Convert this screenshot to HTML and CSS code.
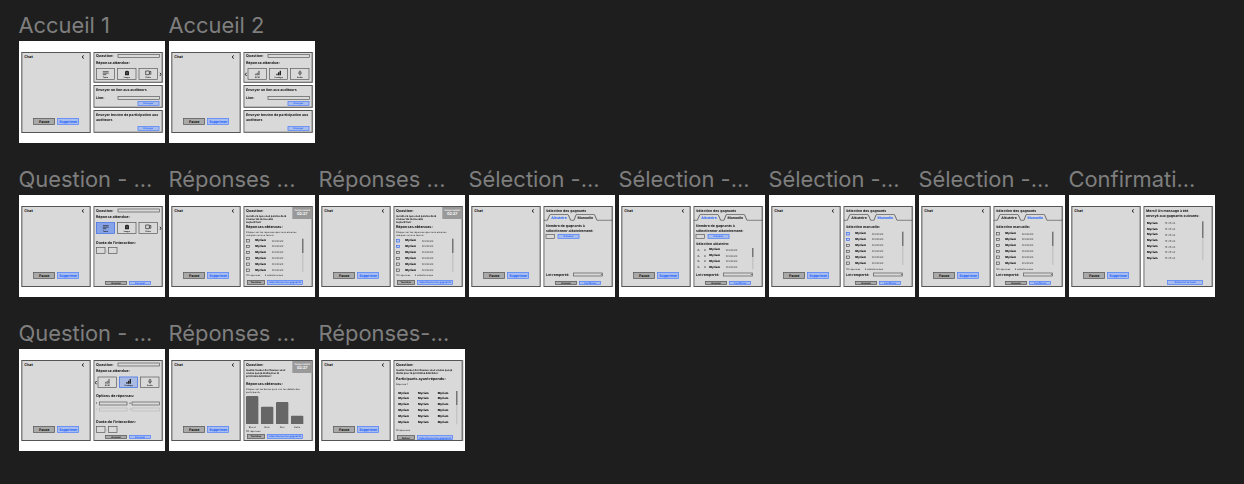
FILE: index.html
```html
<!DOCTYPE html>
<html lang="fr">
<head>
<meta charset="utf-8">
<title>Wireframes</title>
<link rel="stylesheet" href="styles.css">
</head>
<body>
<main class="canvas" id="canvas"></main>
<script src="app.js"></script>
</body>
</html>
```
FILE: styles.css
```css
* { box-sizing: border-box; }
body {
  margin: 0;
  height: 484px;
  overflow: hidden;
  background: #1e1e1e;
  font-family: Inter, "Liberation Sans", sans-serif;
}
.canvas { padding: 11px 0 0 18.5px; }
.row { display: flex; height: 154px; }
.item { width: 150px; }
.title {
  margin: 0;
  height: 30px;
  line-height: 28px;
  font-size: 21.9px;
  font-weight: 400;
  color: #7e7e7e;
  white-space: nowrap;
}
.frame { width: 146.5px; height: 102px; overflow: hidden; background: #fff; }

/* A screen is drawn at three times its size on the canvas. */
.screen {
  display: flex;
  gap: 8px;
  width: 440px;
  height: 307px;
  padding: 33px 8px 31px 7px;
  transform: scale(.33333);
  transform-origin: 0 0;
  font-size: 11px;
  font-weight: 700;
  line-height: 13px;
  color: #111;
  white-space: nowrap;
  text-rendering: geometricPrecision;
}
.panel {
  position: relative;
  width: 208px;
  padding: 0 8px;
  background: #d9d9d9;
  box-shadow: inset 0 0 0 3px #555;
}
.panel.right { box-shadow: inset 0 0 0 3px #555, 2px 0 0 #999; }
.chat { display: grid; grid-template-rows: 30px 1fr 45px; height: 243px; }
.chat-head { display: flex; justify-content: space-between; align-items: center; padding: 0 12px 0 1px; }
.chat .actions { grid-row: 3; padding-left: 28px; }
.chev { display: block; flex: none; width: 7px; height: 12px; fill: none; stroke: #111; stroke-width: 2.6; }

.btn {
  display: flex;
  align-items: center;
  justify-content: center;
  width: 65px;
  height: 11px;
  border: 2px solid #555;
  background: #a9a9a9;
  font-size: 7.5px;
  line-height: 7px;
}
.btn.blue { border-color: #4d7dfa; background: #a9bdec; color: #2463ff; }
.btn.big { height: 20px; font-size: 10.5px; }
.btn.mid { width: 54px; height: 14px; }
.btn.wide { width: 107px; height: 14px; }
.actions { display: flex; gap: 7px; }
.foot { align-self: end; padding: 0 0 7px 28px; }
.foot.low { padding-left: 3px; }
.foot.last { padding-left: 64px; }

.cards { display: flex; flex-direction: column; gap: 7px; width: 208px; }
.card { display: grid; height: 68px; grid-template-rows: 28px 1fr 19px; }
.card.ask { height: 92px; grid-template-rows: 25px 14px 44px; }
.card.call { grid-template-rows: 9px 1fr 19px; }
.card .btn { grid-row: 3; justify-self: end; align-self: start; height: 13px; margin-right: 2px; }
.card.call p { grid-row: 2; align-self: start; }
p { margin: 0; align-self: center; }
.s10 { font-size: 10.6px; }
.field { display: flex; align-items: center; justify-content: space-between; }
.input { width: 126px; height: 11px; margin-right: 1px; border: 2px solid #555; }

.tiles { position: relative; display: flex; gap: 7px; align-self: end; }
.tiles.shift { padding-left: 5px; }
.tile {
  display: flex;
  flex-direction: column;
  align-items: center;
  justify-content: space-between;
  width: 57px;
  height: 34px;
  padding: 3px 0 0;
  border: 2px solid #555;
  font-size: 6px;
  line-height: 8px;
}
.tile svg { width: 20px; height: 18px; fill: none; stroke: #222; stroke-width: 2; }
.tile .fill { fill: #222; stroke: none; }
.tile.on { border-color: #3f6fe8; background: #87a3e8; }
.shift .tile.on { background: #a9bbe3; }
.tiles .chev { position: absolute; top: 12px; right: -5px; }
.tiles.shift .chev { right: auto; left: -4px; }

.view { display: grid; height: 243px; }
.v-question { grid-template-rows: 27px 13px 43px 52px 8px 1fr; }
.v-sondage { grid-template-rows: 27px 13px 44px 46px 24px 60px 4px 1fr; }
.v-list { grid-template-rows: 30px 18px 30px 9px 114px 16px 1fr; }
.v-random { grid-template-rows: 24px 20px 45px 4px 42px 58px 24px 1fr; }
.v-manual { grid-template-rows: 24px 20px 34px 102px 18px 14px 1fr; }
.v-done { grid-template-rows: 43px 123px 1fr; }
.v-chart { grid-template-rows: 30px 20px 42px 0 100px 18px 10px 1fr; }
.v-people { grid-template-rows: 30px 10px 33px 0 123px 30px 1fr; }

.time-boxes { display: flex; gap: 3px; align-self: end; align-items: center; }
.box { width: 28px; height: 19px; border: 2px solid #555; }
.time-boxes span { width: 2px; font-size: 8px; line-height: 8px; color: #777; }
.options { display: grid; grid-template-columns: 94px 92px; gap: 7px 6px; align-self: end; }
.option { display: flex; align-items: center; justify-content: space-between; height: 11px; font-size: 7px; }
.option i { width: 85px; height: 11px; border: 2px solid #555; }
.option.off { opacity: .25; }

.timer {
  position: absolute;
  top: 3px;
  right: 2px;
  width: 59px;
  height: 36px;
  padding-top: 4px;
  background: #999;
  color: #fff;
  text-align: center;
  font-size: 11px;
}
.timer small { display: block; font-size: 7px; line-height: 10px; font-weight: 500; }
.copy { font-size: 7.6px; line-height: 9px; }
.note { align-self: center; font-size: 7.4px; line-height: 8.5px; font-weight: 400; }
.summary { display: flex; gap: 13px; padding-left: 1px; }

.list { position: relative; margin-right: 20px; align-self: end; font-size: 8.3px; }
.entry { display: flex; align-items: center; height: 17.6px; }
.entry em { font-style: normal; font-weight: 400; font-size: 7.8px; color: #333; }
.entry b { width: 49px; }
.entry i { width: 11px; height: 9px; margin: 0 16px 0 1px; border: 2px solid #555; }
.entry i.on { border-color: #3f6fe8; background: #b9c9f2; }
.entry u { width: 20px; padding-left: 4px; text-decoration: none; font-size: 8px; font-weight: 500; }
.list.done { padding-left: 3px; }
.list.done b { width: 53px; }
.list.people { padding-left: 7px; }
.list.people b { width: 59px; }
.list::after {
  content: "";
  position: absolute;
  right: 0;
  top: 3px;
  bottom: 3px;
  width: 3px;
  background: linear-gradient(#444 0 42%, #bbb 42%);
}

.heading { padding-top: 5px; }
.tabs { position: relative; height: 20px; margin: 0 -8px; }
.tabs svg { position: absolute; inset: 0; width: 208px; height: 20px; fill: none; stroke: #333; stroke-width: 2; }
.tabs div { position: relative; display: flex; padding: 7px 0 0 14px; font-size: 10.5px; line-height: 12px; }
.tabs span { width: 66px; text-align: center; }
.tabs span + span { margin-left: 13px; }
.tabs .on { color: #2463ff; }
.generate { display: flex; gap: 8px; align-self: center; margin-left: -1px; }
.generate .box, .generate .btn { height: 14px; }
.lot { display: flex; align-items: center; justify-content: space-between; margin-right: 21px; }
.select { width: 90px; height: 11px; border: 2px solid #555; text-align: right; font-size: 6px; line-height: 7px; padding-right: 2px; }

.chart { display: flex; align-items: flex-end; gap: 8px; }
.bar { width: 37px; border-radius: 3px 3px 0 0; background: #666; }
.labels { display: flex; gap: 8px; }
.labels span { width: 37px; text-align: center; }
```
FILE: app.js
```js
const repeat = (n, fn) => Array.from({ length: n }, (_, i) => fn(i)).join('');

const left = '<svg class="chev" viewBox="0 0 6 11"><path d="M5 1 1.5 5.5 5 10"/></svg>';
const right = '<svg class="chev" viewBox="0 0 6 11"><path d="M1 1 4.5 5.5 1 10"/></svg>';

const icons = {
  Texte: '<path d="M1 5h18M1 9.500h18M1 14h11"/>',
  Image: '<path class="fill" d="M4 4h3l1-2h4l1 2h3v12H4z"/><circle cx="10" cy="9.500" r="2.500" stroke="#aaa" stroke-width="1"/>',
  Vidéo: '<path d="M2 3h11v11H2zM13 7l5-3v9l-5-3"/>',
  QCM: '<path d="M4 15v-3h3v3zM9 15V9h3v6zM14 15V3h2v12z" stroke-width="1.200"/>',
  Sondage: '<path class="fill" d="M3 16v-5h4v5zM8 16V7h4v9zM13 16V2h4v14z"/>',
  Audio: '<path d="M8 3h4v7H8zM6 7v3q0 3 4 3t4-3V7M10 13v4" stroke-width="1.500"/>'
};

const btn = (text, cls = '') => `<div class="btn ${cls}">${text}</div>`;
const ask = '<div class="field">Question:<div class="input"></div></div><p>Réponse attendue:</p>';

function tiles(names, on, shift) {
  const list = names.map(n =>
    `<div class="tile${n === on ? ' on' : ''}"><svg viewBox="0 0 20 18">${icons[n]}</svg>${n}</div>`).join('');
  return `<div class="tiles${shift ? ' shift' : ''}">${list}${shift ? left : right}</div>`;
}
const media = on => tiles(['Texte', 'Image', 'Vidéo'], on, false);
const polls = on => tiles(['QCM', 'Sondage', 'Audio'], on, true);

const view = (name, html) => `<section class="panel right view v-${name}">${html}</section>`;
const times = '<div class="time-boxes"><div class="box"></div><span>:</span><div class="box"></div></div>';
const send = `<div class="actions foot">${btn('Annuler')}${btn('Envoyer', 'blue')}</div>`;
const confirm = `<div class="actions foot">${btn('Annuler')}${btn('Confirmer', 'blue')}</div>`;
const pick = first => `<div class="actions foot low">${btn(first, 'mid')}${btn('Sélectionner les gagnants', 'wide blue')}</div>`;
const timer = '<div class="timer"><small>Temps restant</small>02:27</div>';
const summary = '<div class="note summary"><span>10 réponses</span><span>2 sélectionnées</span></div>';

const home = choices => `<div class="cards">
  <section class="panel right card ask">${ask}${choices}</section>
  <section class="panel right card"><p class="s10">Envoyer un lien aux auditeurs</p>
    <div class="field s10">Lien:<div class="input"></div></div>${btn('Envoyer', 'blue')}</section>
  <section class="panel right card call"><p class="s10">Envoyer bouton de participation aux<br>auditeurs</p>${btn('Envoyer', 'blue')}</section>
</div>`;

const checks = (n, checked) => `<div class="list">${repeat(n, i =>
  `<div class="entry"><i class="${i < checked ? 'on' : ''}"></i><b>Myriam</b><em>Croissant</em></div>`)}</div>`;

const answers = checked => view('list', `<p>Question:</p>
  <p class="copy">Qu'est-ce que vous pensez de la<br>couleur de la nouvelle<br>aujourd'hui?</p>
  <p>Réponses obtenues:</p>
  <p class="note">Cliquez sur les réponses que vous aimeriez<br>marquer comme favoris.</p>
  ${checks(6, checked)}${summary}${pick('Terminer')}${timer}`);

const tabs = second => `<p class="s10 heading">Sélection des gagnants</p><div class="tabs">
  <svg viewBox="0 0 208 20"><path d="M0 19H12L19 3Q20 1 22 1H72Q74 1 75 3L82 19H92L98 3Q99 1 101 1H151Q153 1 154 3L161 19H208"/></svg>
  <div><span class="${second ? '' : 'on'}">Aléatoire</span><span class="${second ? 'on' : ''}">Manuelle</span></div></div>`;
const lot = '<div class="lot s10">Lot remporté:<div class="select">▾</div></div>';

const random = drawn => view('random', `${tabs(false)}
  <p class="s10">Nombre de gagnants à<br>sélectionner aléatoirement:</p>
  <div class="generate"><div class="box"></div>${btn('Générer', 'blue')}</div>
  <p class="s10">${drawn ? 'Sélection aléatoire:' : ''}</p>
  ${drawn ? `<div class="list">${repeat(4, () => '<div class="entry"><u>↻</u><u>X</u><b>Myriam</b><em>Croissant</em></div>')}</div>` : '<div></div>'}
  ${lot}${confirm}`);

const manual = checked => view('manual', `${tabs(true)}<p class="s10">Sélection manuelle:</p>
  ${checks(6, checked)}${summary}${lot}${confirm}`);

const done = view('done', `<p class="s10">Merci! Un message à été<br>envoyé aux gagnants suivants:</p>
  <div class="list done">${repeat(7, () => '<div class="entry"><b>Myriam</b><em>14:25:32</em></div>')}</div>
  <div class="actions foot last">${btn("Retour à l'accueil", 'wide blue')}</div>`);

const question = view('question', `${ask}${media('Texte')}<p>Durée de l'interaction:</p>${times}${send}`);

const option = (n, off) => `<div class="option${off ? ' off' : ''}">${n}<i></i></div>`;
const sondage = view('sondage', `${ask}${polls('Sondage')}<p>Options de réponses:</p>
  <div class="options">${option(1)}${option(2)}${option(3, true)}${option(4, true)}</div>
  <p>Durée de l'interaction:</p>${times}${send}`);

const chart = view('chart', `<p>Question:</p>
  <p class="copy">Quelle couleur de cheveux vous<br>voulez que je mette pour la<br>prochaine émission?</p>
  <p>Réponses obtenues:</p>
  <p class="note">Cliquez sur les barres pour voir les détails des<br>participants.</p>
  <div class="chart">${[84, 52, 66, 25].map(h => `<div class="bar" style="height:${h}px"></div>`).join('')}</div>
  <div class="note labels"><span>Blond</span><span>Brun</span><span>Noir</span><span>Autre</span></div>
  <div class="note">50 réponses</div>${pick('Terminer')}${timer}`);

const people = view('people', `<p>Question:</p>
  <p class="copy">Quelle couleur de cheveux vous voulez que je<br>mette pour la prochaine émission?</p>
  <p>Participants ayant répondu:</p><p class="note">Réponse 1</p>
  <div class="list people">${repeat(6, () => '<div class="entry"><b>Myriam</b><b>Myriam</b><b>Myriam</b></div>')}</div>
  <div class="note">18 réponses</div>${pick('Retour')}`);

const chat = `<section class="panel chat"><div class="chat-head">Chat${left}</div>
  <div class="actions">${btn('Pause', 'big')}${btn('Supprimer', 'big blue')}</div></section>`;

const rows = [
  [['Accueil 1', home(media())], ['Accueil 2', home(polls())]],
  [['Question - ...', question], ['Réponses ...', answers(0)], ['Réponses ...', answers(2)],
    ['Sélection -...', random(false)], ['Sélection -...', random(true)],
    ['Sélection -...', manual(2)], ['Sélection -...', manual(0)], ['Confirmati...', done]],
  [['Question - ...', sondage], ['Réponses ...', chart], ['Réponses-...', people]]
];

document.getElementById('canvas').innerHTML = rows.map(row => `<div class="row">${row.map(([title, body]) =>
  `<article class="item"><h2 class="title">${title}</h2><div class="frame"><div class="screen">${chat}${body}</div></div></article>`
).join('')}</div>`).join('');
```
